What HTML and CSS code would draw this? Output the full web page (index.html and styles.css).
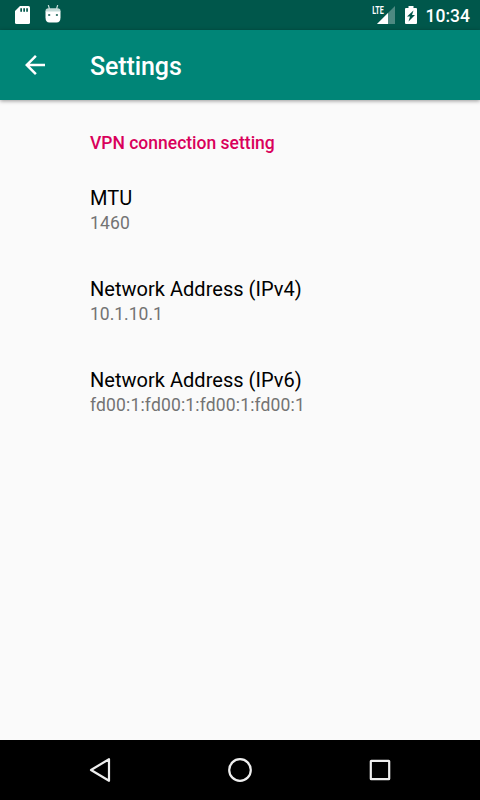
FILE: index.html
```html
<!DOCTYPE html>
<html lang="en">
<head>
    <meta charset="UTF-8">
    <meta name="viewport" content="width=device-width, initial-scale=1.0">
    <title>Settings</title>
    <link rel="stylesheet" href="styles.css">
</head>
<body>
    <div class="statusbar">
        <svg class="sd" width="15" height="18" viewBox="0 0 15 18">
            <path fill="#fff" d="M5 0h8.500q1.500 0 1.500 1.500v15q0 1.500-1.500 1.500h-12q-1.500 0-1.500-1.500V5z"/>
            <path fill="#00574b" d="M5.300 2.200h1.700v3.600h-1.700zM8.300 2.200h1.700v3.600h-1.700zM11.200 2.200h1.700v3.600h-1.700z"/>
        </svg>
        <svg class="droid" width="16" height="18" viewBox="0 0 16 18">
            <path fill="none" stroke="#c5dbd8" stroke-width="1.200" d="M3.300 0l1.200 4M12.700 0l-1.200 4"/>
            <path fill="#c5dbd8" d="M.5 7V6q0-2.800 3-2.800h9q3 0 3 2.800v1z"/>
            <path fill="#fff" d="M.5 6.500h15v6q0 5-4 5h-7q-4 0-4-5z"/>
            <path fill="#477f76" d="M3.200 9h2v2h-2zM10.900 9h2v2h-2z"/>
        </svg>
        <svg class="signal" width="24" height="24" viewBox="0 -5 24 24">
            <path fill="#4d8981" d="M24 0v18H6z"/>
            <path fill="#fff" d="M17 7v11H6z"/>
            <path fill="#00574b" d="M0 0h14v9H0z"/>
            <text class="lte" x="1.300" y="8" textLength="11.500" lengthAdjust="spacingAndGlyphs">LTE</text>
        </svg>
        <svg class="battery" width="12" height="18" viewBox="0 0 12 18">
            <path fill="#fff" d="M3.500 0h5v2H11q1 0 1 1v14q0 1-1 1H1q-1 0-1-1V3q0-1 1-1h2.500z"/>
            <path fill="#00574b" d="M8.500 4.500L2 10.500h3l-1.500 5 6.500-6.500H7z"/>
        </svg>
        <span class="clock">10:34</span>
    </div>
    <header class="toolbar">
        <svg class="back" width="30" height="30" viewBox="0 0 24 24">
            <path fill="#fff" d="M20 11H7.830l5.590-5.590L12 4l-8 8 8 8 1.410-1.410L7.830 13H20v-2z"/>
        </svg>
        <h1 class="title">Settings</h1>
    </header>
    <main class="content">
        <h2 class="category">VPN connection setting</h2>
        <div class="pref">
            <div class="name">MTU</div>
            <div class="value">1460</div>
        </div>
        <div class="pref">
            <div class="name">Network Address (IPv4)</div>
            <div class="value">10.1.10.1</div>
        </div>
        <div class="pref">
            <div class="name">Network Address (IPv6)</div>
            <div class="value">fd00:1:fd00:1:fd00:1:fd00:1</div>
        </div>
    </main>
    <nav class="navbar">
        <svg width="30" height="30" viewBox="0 0 30 30"><path d="M24 4.200v21.600L6 15z"/></svg>
        <svg width="30" height="30" viewBox="0 0 30 30"><circle cx="15" cy="15" r="10.800"/></svg>
        <svg width="30" height="30" viewBox="0 0 30 30"><rect x="5.800" y="5.800" width="18.400" height="18.400" rx=".5"/></svg>
    </nav>
</body>
</html>
```
FILE: styles.css
```css
html, body {
    margin: 0;
    padding: 0;
    height: 100%;
    overflow: hidden;
}

body {
    display: flex;
    flex-direction: column;
    background: #fafafa;
    font-family: Roboto, sans-serif;
}

.statusbar {
    display: flex;
    align-items: flex-start;
    box-sizing: border-box;
    height: 30px;
    padding: 6px 10px 0 15px;
    background: #00574b;
}

.droid {
    margin: -1px 0 0 15px;
}

.signal {
    margin: -5px 0 0 auto;
}

.lte {
    fill: #fff;
    font-size: 11px;
    font-weight: 700;
}

.battery {
    margin: 0 9px 0 10px;
}

.clock {
    color: #fff;
    font-size: 17.5px;
    font-weight: 500;
    line-height: 20px;
}

.toolbar {
    display: flex;
    align-items: center;
    height: 70px;
    background: #008577;
    box-shadow: 0 1px 4px rgba(0, 0, 0, 0.4);
}

.back {
    margin: 0 40px 0 20px;
}

.title {
    margin: 3px 0 0;
    color: #fff;
    font-size: 25px;
    font-weight: 500;
    letter-spacing: -0.1px;
}

.content {
    flex: 1;
    padding: 33px 20px 0 90px;
}

.category {
    margin: 0 0 32px;
    color: #d9005b;
    font-size: 17.5px;
    font-weight: 500;
    line-height: 21px;
}

.pref {
    height: 91px;
}

.name {
    color: #000;
    font-size: 20px;
    line-height: 24px;
    letter-spacing: 0.03px;
}

.value {
    margin-top: 3px;
    color: #737373;
    font-size: 17.5px;
    line-height: 21px;
    letter-spacing: 0.16px;
}

.pref:nth-of-type(2) .value {
    letter-spacing: 0;
}

.navbar {
    display: flex;
    align-items: center;
    justify-content: center;
    gap: 110px;
    height: 60px;
    background: #000;
}

.navbar svg {
    fill: none;
    stroke: #eee;
    stroke-width: 2.2;
    stroke-linejoin: round;
}
```
